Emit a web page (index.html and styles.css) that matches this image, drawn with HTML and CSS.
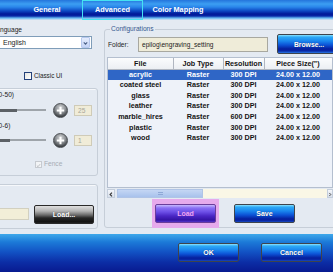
FILE: index.html
```html
<!DOCTYPE html>
<html lang="en">
<head>
    <meta charset="UTF-8">
    <meta name="viewport" content="width=device-width, initial-scale=1.0">
    <title>Advanced</title>
<link rel="stylesheet" href="styles.css">
</head>
<body>
    <div class="tab-header">
        <span class="tab-items">General</span>
        <span class="tab-items active">Advanced</span>
        <span class="tab-items wide">Color Mapping</span>
    </div>

    <div class="tab-panel">
        <div class="side">
            <div class="label">Language</div>
            <div class="select">
                <span>English</span>
                <span class="arrow">
                    <svg width="9" height="11" viewBox="0 0 9 11"><path d="M2.3 4.2 L4.5 6.4 L6.7 4.2" fill="none" stroke="#4a5f86" stroke-width="1.4"/></svg>
                </span>
            </div>
            <div class="check classic"><span class="box"></span>Classic UI</div>

            <div class="group settings">
                <div class="range-label">(0-50)</div>
                <div class="range">
                    <span class="track"><span class="fill" style="width: 20px"></span></span>
                    <span class="plus"><svg width="15" height="15" viewBox="0 0 15 15"><path d="M7.5 3.8v7.4M3.8 7.5h7.4" stroke="#fff" stroke-width="2"/></svg></span>
                    <span class="num">25</span>
                </div>
                <div class="range-label second">(0-6)</div>
                <div class="range">
                    <span class="track"><span class="fill" style="width: 13px"></span></span>
                    <span class="plus"><svg width="15" height="15" viewBox="0 0 15 15"><path d="M7.5 3.8v7.4M3.8 7.5h7.4" stroke="#fff" stroke-width="2"/></svg></span>
                    <span class="num">1</span>
                </div>
                <div class="check fence">
                    <span class="box"><svg width="7" height="7" viewBox="0 0 7 7"><path d="M1.2 3.6 L2.8 5.2 L5.8 1.6" fill="none" stroke="#b4b8bc" stroke-width="1.2"/></svg></span>Fence
                </div>
            </div>

            <div class="group loader">
                <span class="field"></span>
                <span class="btn dark">Load...</span>
            </div>
        </div>

        <fieldset class="config">
            <legend>Configurations</legend>
            <div class="folder-row">
                <span class="folder-label">Folder:</span>
                <span class="folder">epilog\engraving_setting</span>
                <span class="btn blue browse">Browse...</span>
            </div>

            <div class="grid">
                <table>
                    <colgroup>
                        <col style="width: 65px">
                        <col style="width: 50px">
                        <col style="width: 41px">
                        <col style="width: 68px">
                    </colgroup>
                    <thead>
                        <tr><th>File</th><th>Job Type</th><th>Resolution</th><th>Piece Size(")</th></tr>
                    </thead>
                    <tbody>
                        <tr class="selected"><td>acrylic</td><td>Raster</td><td>300 DPI</td><td>24.00 x 12.00</td></tr>
                        <tr><td>coated steel</td><td>Raster</td><td>300 DPI</td><td>24.00 x 12.00</td></tr>
                        <tr><td>glass</td><td>Raster</td><td>300 DPI</td><td>24.00 x 12.00</td></tr>
                        <tr><td>leather</td><td>Raster</td><td>300 DPI</td><td>24.00 x 12.00</td></tr>
                        <tr><td>marble_hires</td><td>Raster</td><td>600 DPI</td><td>24.00 x 12.00</td></tr>
                        <tr><td>plastic</td><td>Raster</td><td>300 DPI</td><td>24.00 x 12.00</td></tr>
                        <tr><td>wood</td><td>Raster</td><td>300 DPI</td><td>24.00 x 12.00</td></tr>
                    </tbody>
                </table>
            </div>
            <div class="hscroll">
                <span class="sb-btn"><svg width="7" height="9" viewBox="0 0 7 9"><path d="M4.6 2.2 L2.4 4.5 L4.6 6.8" fill="none" stroke="#333" stroke-width="1.3"/></svg></span>
                <span class="thumb"><span class="grip"></span></span>
                <span class="rail"></span>
                <span class="sb-btn right"><svg width="6" height="9" viewBox="0 0 6 9"><path d="M2 2.2 L4.2 4.5 L2 6.8" fill="none" stroke="#333" stroke-width="1.3"/></svg></span>
            </div>

            <div class="actions">
                <span class="focus"><span class="btn purple">Load</span></span>
                <span class="btn blue">Save</span>
            </div>
        </fieldset>
    </div>

    <div class="footer">
        <span class="btn blue">OK</span>
        <span class="btn blue">Cancel</span>
    </div>
</body>
</html>
```

FILE: styles.css
```css
* {
    box-sizing: border-box;
}
body {
    margin: 0;
    width: 333px;
    height: 272px;
    overflow: hidden;
    font-family: "Liberation Sans", Arial, sans-serif;
    font-size: 6.6px;
    color: #1c1c1c;
    background: #e4eaf2;
}

/* top tabs */
.tab-header {
    display: flex;
    height: 20px;
    padding-left: 12px;
    background: linear-gradient(to bottom, #2474dc 0, #3c9ef2 4px, #2a86ea 7px, #0c46c2 11px, #001898 14px, #0626a6 16px, #62b6f0 18px, #d6e4f4 20px);
}
.tab-items {
    width: 70px;
    line-height: 19px;
    text-align: center;
    color: #fff;
    font-weight: bold;
    font-size: 7.3px;
}
.tab-items.active {
    width: 61px;
    height: 20px;
    border: 1px solid #44e2f2;
    line-height: 18px;
}

/* main panel */
.tab-panel {
    display: flex;
    height: 214px;
    background: #e4eaf2;
}
.side {
    width: 110px;
    flex-shrink: 0;
    margin-left: -10px;
}
.label {
    margin: 6px 0 0 2.7px;
    line-height: 8px;
}
.select {
    display: flex;
    align-items: center;
    justify-content: space-between;
    width: 102px;
    height: 13px;
    margin-top: 2px;
    padding: 0 1px 0 12px;
    background: #fff;
    border: 1px solid #7f9db9;
    font-size: 7px;
}
.select .arrow {
    display: flex;
    width: 9px;
    height: 11px;
    border: 1px solid #b6c8ee;
    border-radius: 1px;
    background: linear-gradient(#e4ecfc, #c4d4f6);
}
.check {
    display: flex;
    align-items: center;
    gap: 2px;
    line-height: 10px;
}
.check .box {
    display: flex;
    width: 8px;
    height: 8px;
    border: 1px solid #23417a;
    background: linear-gradient(135deg, #e6e6e0, #fff);
}
.classic {
    margin: 22px 0 0 34px;
    font-size: 6.3px;
}
.group {
    margin: 7px 2px 0 2px;
    border: 1px solid #c6ced8;
    border-radius: 3px;
    box-shadow: inset 1px 1px 0 #f6f8fb;
}
.settings {
    height: 88px;
    padding: 2px 0 0 4px;
}
.range-label {
    margin-left: -0.6px;
    line-height: 8px;
}
.range-label.second {
    margin-top: 5px;
}
.range {
    display: flex;
    align-items: center;
    height: 14px;
    margin-top: 4px;
}
.range-label.second + .range {
    margin-top: 3px;
}
.track {
    display: flex;
    align-items: center;
    width: 49px;
    height: 2px;
    margin-right: 7px;
    background: #9ea4aa;
}
.track .fill {
    height: 3px;
    background: #5c6166;
}
.plus {
    display: flex;
    width: 15px;
    height: 15px;
    border-radius: 50%;
    border: 1px solid #4a4e52;
    background: radial-gradient(circle at 50% 30%, #d6d8da 0, #8a8e92 45%, #3a3e42 80%, #2a2c2e 100%);
}
.plus svg {
    margin: -1px;
}
.num {
    width: 18px;
    height: 11px;
    margin-left: 6px;
    padding-left: 3px;
    line-height: 10px;
    background: #f0ecd8;
    border: 1px solid #cfcbb8;
    color: #a6a69a;
    font-size: 6.6px;
}
.fence {
    margin: 12px 0 0 38px;
    color: #a6acb4;
}
.fence .box {
    width: 7px;
    height: 7px;
    border-color: #c6cad0;
    background: #f2f4f6;
}
.loader {
    display: flex;
    align-items: flex-start;
    justify-content: flex-end;
    height: 45px;
    margin-top: 8px;
    padding: 20px 3px 0 0;
}
.loader .field {
    width: 36px;
    height: 12px;
    margin: 3px 5px 0 0;
    background: #f2eed8;
    border: 1px solid #d2d0c0;
}

/* buttons */
.btn {
    display: flex;
    align-items: center;
    justify-content: center;
    width: 61px;
    height: 19px;
    border: 1px solid #3e444c;
    border-radius: 2px;
    color: #fff;
    font-weight: bold;
    font-size: 7px;
    text-shadow: 0 0 1px rgba(0, 0, 0, 0.5);
}
.btn.blue {
    background: linear-gradient(to bottom, #8ee4ff 0, #2eaaf6 2px, #1a86ee 6px, #0c52d6 10px, #061e9c 14px, #0a2aa8 16px, #2a7ae6 18px);
}
.btn.dark {
    width: 60px;
    background: linear-gradient(to bottom, #e0e0e0 0, #b4b4b4 5px, #6a6a6a 9px, #262626 12px, #121212 16px, #3a3a3a 18px);
    border-color: #2a2a2a;
}
.btn.purple {
    background: linear-gradient(to bottom, #c8b8ff 0, #8a70f4 3px, #6c4ee6 7px, #4a26c4 11px, #3414a4 15px, #6646dc 18px);
    border-color: #6a3e9a;
    color: #f2a6f0;
    text-shadow: none;
}

/* configurations */
.config {
    width: 240px;
    flex-shrink: 0;
    margin: 5px 0 0 4px;
    padding: 0 0 0 2px;
    height: 203px;
    border: 1px solid #c6ced8;
    border-radius: 3px;
    min-width: 0;
}
.config legend {
    margin-left: 3px;
    padding: 0 1px;
    line-height: 8px;
    color: #35588f;
}
.folder-row {
    display: flex;
    align-items: center;
    height: 20px;
    margin-top: 1px;
}
.folder-label {
    width: 31px;
    padding-left: 1px;
}
.folder {
    width: 130px;
    height: 15px;
    padding-left: 3px;
    line-height: 13px;
    background: #efecd9;
    border: 1px solid #a8a8a0;
}
.browse {
    width: 64px;
    height: 20px;
    margin-left: 9px;
    font-size: 6.8px;
}
.grid {
    width: 226px;
    height: 131px;
    margin-top: 3px;
    background: #eef2f9;
    border: 1px solid #b4bfcf;
    overflow: hidden;
}
.grid table {
    width: 224px;
    border-collapse: collapse;
    table-layout: fixed;
    font-weight: bold;
    font-size: 7.2px;
    color: #141414;
}
.grid th {
    height: 11px;
    padding: 0;
    background: linear-gradient(#fbfcfd, #eceff3);
    border-right: 1px solid #b0b6c0;
    border-bottom: 1px solid #b0b6c0;
    font-size: 7.2px;
}
.grid td {
    height: 10.67px;
    padding: 0;
    text-align: center;
    line-height: 10px;
}
.grid tr.selected td {
    background: #2f66c6;
    color: #fff;
}
.hscroll {
    display: flex;
    width: 226px;
    height: 9px;
    margin-top: 1px;
}
.sb-btn {
    display: flex;
    width: 8px;
    height: 9px;
    background: linear-gradient(#f4f6fa, #d8e0ec);
    border: 1px solid #c4cedc;
}
.sb-btn.right {
    width: 6px;
}
.thumb {
    display: flex;
    align-items: center;
    justify-content: center;
    width: 86px;
    margin-left: 2px;
    background: linear-gradient(#c4d6f4, #a8c2ec);
    border: 1px solid #b0c4e6;
}
.grip {
    width: 5px;
    height: 3px;
    border-top: 1px solid #8ea8d6;
    border-bottom: 1px solid #8ea8d6;
}
.rail {
    flex: 1;
    background: #faf7e6;
}
.actions {
    display: flex;
    align-items: flex-start;
    gap: 15px;
    margin: 1px 0 0 45px;
}
.actions > .btn {
    margin-top: 5px;
}
.focus {
    display: flex;
    padding: 5px 3px;
    background: #e6aaec;
}

/* bottom bar */
.footer {
    display: flex;
    justify-content: flex-end;
    gap: 22px;
    height: 38px;
    padding: 9px 11px 0 0;
    background: linear-gradient(to bottom, #3ea8ea 0, #1c7ad8 8px, #1252c4 18px, #0c2ea6 28px, #081a90 38px);
}
```
